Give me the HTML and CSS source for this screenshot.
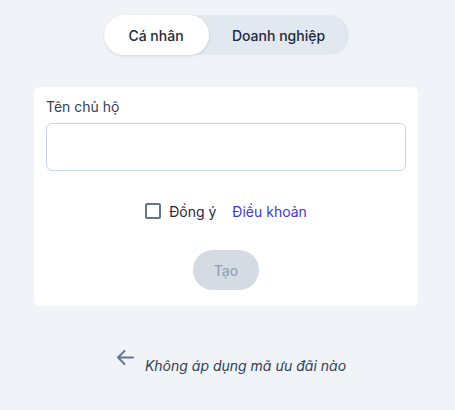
FILE: index.html
```html
<!DOCTYPE html>
<html lang="vi">
<head>
<meta charset="utf-8">
<link rel="stylesheet" href="styles.css">
</head>
<body>
<div class="page">
  <div class="toggle">
    <div class="tab tab-active">Cá nhân</div>
    <div class="tab tab-other">Doanh nghiệp</div>
  </div>
  <div class="card">
    <label class="label">Tên chủ hộ</label>
    <div class="input"></div>
    <div class="agree">
      <span class="checkbox"></span>
      <span class="agree-text">Đồng ý</span>
      <span class="terms">Điều khoản</span>
    </div>
    <div class="actions">
      <button class="btn">Tạo</button>
    </div>
  </div>
  <div class="back">
    <svg class="arrow" width="18" height="18" viewBox="0 0 18 18" fill="none" stroke="#64748b" stroke-width="2" stroke-linecap="round" stroke-linejoin="round">
      <path d="M17 8.5H2M8.5 2L2 8.5 8.5 15"/>
    </svg>
    <span class="back-text">Không áp dụng mã ưu đãi nào</span>
  </div>
</div>
</body>
</html>
```
FILE: styles.css
```css
html, body {
  margin: 0;
  padding: 0;
  background: #f0f3f8;
  font-family: "Inter", "Noto Sans", sans-serif;
}
.page {
  padding-top: 15px;
  padding-right: 3px;
  display: flex;
  flex-direction: column;
  align-items: center;
}
.toggle {
  display: flex;
  width: 245px;
  height: 40px;
  background: #e2e8f0;
  border-radius: 20px;
  box-sizing: border-box;
}
.tab {
  display: flex;
  align-items: center;
  justify-content: center;
  font-size: 14px;
  font-weight: 500;
  color: #1e293b;
  height: 40px;
  border-radius: 20px;
}
.tab-active {
  width: 105px;
  background: #ffffff;
  box-shadow: 0 1px 3px rgba(15, 23, 42, 0.12);
}
.tab-other {
  flex: 1;
}
.card {
  align-self: stretch;
  margin: 32px 34px 0;
  background: #ffffff;
  border-radius: 6px;
  padding: 10px 12px 16px;
  display: flex;
  flex-direction: column;
}
.label {
  font-size: 14px;
  line-height: 20px;
  color: #374151;
  margin-bottom: 6px;
}
.input {
  height: 48px;
  box-sizing: border-box;
  border: 1px solid #cbd5e1;
  border-radius: 6px;
  background: #fff;
}
.agree {
  display: flex;
  align-items: center;
  justify-content: center;
  margin-top: 30px;
  height: 20px;
  font-size: 14px;
}
.checkbox {
  width: 16px;
  height: 16px;
  box-sizing: border-box;
  border: 2px solid #64748b;
  border-radius: 2px;
  margin-right: 8px;
}
.agree-text {
  color: #1e293b;
  margin-right: 16px;
}
.terms {
  color: #4338ca;
}
.actions {
  display: flex;
  justify-content: center;
  margin-top: 29px;
}
.btn {
  width: 66px;
  height: 40px;
  border: none;
  border-radius: 20px;
  background: #d5dbe3;
  color: #94a3b8;
  font-family: inherit;
  font-size: 14px;
  font-weight: 500;
  padding: 0;
}
.back {
  display: flex;
  align-items: flex-start;
  margin-top: 43px;
  margin-left: 10px;
}
.arrow {
  margin-right: 11px;
}
.back-text {
  margin-top: 7px;
  font-size: 14px;
  line-height: 20px;
  font-style: italic;
  color: #334155;
}
```
